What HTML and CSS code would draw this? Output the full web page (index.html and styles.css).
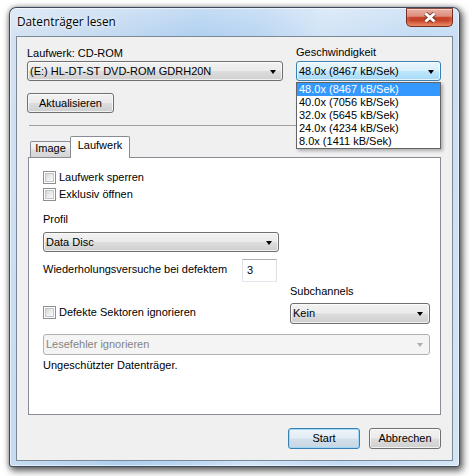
FILE: index.html
```html
<!DOCTYPE html>
<html lang="de">
<head>
<meta charset="utf-8">
<title>Datenträger lesen</title>
<link rel="stylesheet" href="styles.css">
</head>
<body>
<div class="window">
  <div class="titlebar">
    <span class="caption">Datenträger lesen</span>
    <button class="close" aria-label="Schließen">
      <svg width="14" height="11" viewBox="0 0 14 11">
        <path d="M2.5 1.5 L11.5 9.5 M11.5 1.5 L2.5 9.5" stroke="#5a2219" stroke-opacity=".7" stroke-width="4.8" fill="none"/>
        <path d="M2.5 1.5 L11.5 9.5 M11.5 1.5 L2.5 9.5" stroke="#fff" stroke-width="3" fill="none"/>
      </svg>
    </button>
  </div>

  <div class="client">
    <div class="source">
      <div class="field">
        <div class="label">Laufwerk: CD-ROM</div>
        <div class="combo drive"><span>(E:) HL-DT-ST DVD-ROM GDRH20N</span><i class="arrow"></i></div>
        <button class="btn refresh">Aktualisieren</button>
      </div>
      <div class="field">
        <div class="label label-speed">Geschwindigkeit</div>
        <div class="dropdown">
          <div class="combo hot"><span>48.0x (8467 kB/Sek)</span><i class="arrow"></i></div>
          <ul class="listbox">
            <li class="selected">48.0x (8467 kB/Sek)</li>
            <li>40.0x (7056 kB/Sek)</li>
            <li>32.0x (5645 kB/Sek)</li>
            <li>24.0x (4234 kB/Sek)</li>
            <li>8.0x (1411 kB/Sek)</li>
          </ul>
        </div>
      </div>
    </div>

    <hr class="separator">

    <div class="tabs">
      <div class="tab">Image</div>
      <div class="tab active">Laufwerk</div>
    </div>

    <div class="panel">
      <label class="check"><span class="box"><span></span></span>Laufwerk sperren</label>
      <label class="check second"><span class="box"><span></span></span>Exklusiv öffnen</label>

      <div class="label profile-label">Profil</div>
      <div class="combo profile"><span>Data Disc</span><i class="arrow"></i></div>

      <div class="retry">
        <span class="retry-label">Wiederholungsversuche bei defektem</span>
        <span class="textbox">3</span>
      </div>

      <div class="sub">
        <label class="check sub-check"><span class="box"><span></span></span>Defekte Sektoren ignorieren</label>
        <div class="sub-field">
          <div class="label sub-label">Subchannels</div>
          <div class="combo kein"><span>Kein</span><i class="arrow"></i></div>
        </div>
      </div>

      <div class="combo disabled"><span>Lesefehler ignorieren</span><i class="arrow"></i></div>
      <div class="status">Ungeschützter Datenträger.</div>
    </div>

    <div class="actions">
      <button class="btn default">Start</button>
      <button class="btn">Abbrechen</button>
    </div>
  </div>
</div>
</body>
</html>
```

FILE: styles.css
```css
* { box-sizing: border-box; }

html, body { margin: 0; }

body {
  width: 470px;
  height: 476px;
  overflow: hidden;
  padding: 7px 0 0 9px;
  background: #fff;
  font: 11px/13px "Liberation Sans", Arial, sans-serif;
  color: #000;
}

/* ---------- window frame ---------- */
.window {
  width: 451px;
  height: 460px;
  display: flex;
  flex-direction: column;
  padding: 0 6px 5px 6px;
  border: 1px solid rgba(35, 48, 64, .85);
  border-radius: 7px 7px 3px 3px;
  background:
    linear-gradient(180deg, rgba(255,255,255,.28) 0, rgba(255,255,255,0) 30px),
    linear-gradient(100deg, #d4e3f3 0%, #c4daf0 18%, #afcff0 36%, #b9d5f2 48%, #d1e3f6 60%, #c3dbf4 78%, #d3e5f7 100%);
  box-shadow:
    inset 0 0 0 1px rgba(255,255,255,.55),
    2px 3px 7px 1px rgba(0,0,0,.6),
    0 0 5px rgba(0,0,0,.25);
}

.titlebar {
  height: 28px;
  flex: none;
  display: flex;
  justify-content: space-between;
  align-items: flex-start;
}

.caption {
  margin-top: 5px;
  padding-left: 1px;
  font: 11.8px/16px "Open Sans", "Noto Sans", sans-serif;
  color: #000;
  text-shadow: 0 0 6px rgba(255,255,255,.9), 0 0 2px rgba(255,255,255,.8);
}

.close {
  width: 47px;
  height: 19px;
  padding: 0;
  display: flex;
  align-items: center;
  justify-content: center;
  border: 1px solid #7a2e22;
  border-top-color: #8a4a40;
  border-radius: 1px 1px 5px 5px;
  background: linear-gradient(180deg, #eab0a3 0%, #dc8f80 42%, #c9472f 50%, #bf3d26 68%, #d4644a 100%);
  box-shadow: inset 0 1px 0 rgba(255,255,255,.45), inset 0 -3px 4px rgba(255,170,120,.55);
}

/* ---------- client area ---------- */
.client {
  flex: 1;
  background: #f0f0f0;
  border: 1px solid #7b8896;
  padding: 10px 11px 0 10px;
}

.label { height: 13px; }

.source {
  display: grid;
  grid-template-columns: 256px 145px;
  column-gap: 13px;
}

.field {
  display: flex;
  flex-direction: column;
  align-items: flex-start;
}

.field .label { margin-bottom: 1px; }
.field .label-speed { margin-top: -1px; margin-bottom: 2px; }

/* combo boxes and buttons share the Aero push-button look */
.combo,
.btn {
  border: 1px solid #707070;
  border-radius: 3px;
  background: linear-gradient(180deg, #f2f2f2 0%, #ebebeb 48%, #dddddd 52%, #cfcfcf 100%);
  box-shadow: inset 0 0 0 1px rgba(255,255,255,.7);
  font: inherit;
  color: #000;
}

.combo {
  height: 20px;
  display: flex;
  align-items: center;
  justify-content: space-between;
  padding: 0 6px 0 2px;
  white-space: nowrap;
}

.arrow {
  width: 0;
  height: 0;
  border-left: 3.5px solid transparent;
  border-right: 3.5px solid transparent;
  border-top: 4px solid #000;
  margin-top: 1px;
}

.combo.drive { width: 256px; }

.combo.hot {
  width: 145px;
  border-color: #3c7fb1;
  background: linear-gradient(180deg, #eaf6fd 0%, #d9f0fc 48%, #bee6fd 52%, #a7d9f5 100%);
}

.dropdown { position: relative; }

.listbox {
  position: absolute;
  top: 21px;
  left: 0;
  z-index: 5;
  width: 145px;
  margin: 0;
  padding: 0;
  list-style: none;
  background: #fff;
  border: 1px solid #646464;
  box-shadow: 2px 2px 3px rgba(0,0,0,.28);
}

.listbox li {
  height: 13px;
  line-height: 13px;
  padding-left: 2px;
  white-space: nowrap;
}

.listbox li.selected {
  background: #3399ff;
  color: #fff;
}

.btn {
  height: 20px;
  padding: 0;
  text-align: center;
}

.btn.refresh {
  width: 87px;
  margin-top: 12px;
}

.separator {
  height: 1px;
  margin: 12px 1px 0 2px;
  border: 0;
  background: #a0a0a0;
}

/* ---------- tab control ---------- */
.tabs {
  height: 21px;
  margin-top: 10px;
  padding-left: 3px;
  display: flex;
  align-items: flex-end;
}

.tab {
  height: 16px;
  width: 41px;
  text-align: center;
  border: 1px solid #898c95;
  border-bottom: 0;
  border-radius: 2px 2px 0 0;
  background: linear-gradient(180deg, #f3f3f3 0%, #ebebeb 45%, #dedede 55%, #d5d5d5 100%);
}

.tab.active {
  position: relative;
  z-index: 1;
  height: 22px;
  width: 60px;
  margin-left: -1px;
  margin-bottom: -1px;
  padding-top: 2px;
  background: #fff;
}

.panel {
  height: 258px;
  margin-left: 1px;
  border: 1px solid #898c95;
  background: #fff;
  padding: 13px 10px 0 14px;
}

.check {
  display: flex;
  align-items: center;
  gap: 3px;
  height: 13px;
  white-space: nowrap;
}

.check.second { margin-top: 4px; }

.box {
  width: 13px;
  height: 13px;
  flex: none;
  border: 1px solid #8e8f8f;
  background: #fff;
  padding: 1px;
}

.box span {
  display: block;
  width: 9px;
  height: 9px;
  border: 1px solid #c4c6ca;
  background: linear-gradient(135deg, #d3d6da 0%, #eceef0 55%, #f8f8f8 100%);
}

.profile-label { margin-top: 12px; }

.combo.profile {
  width: 236px;
  margin-top: 6px;
}

.retry {
  margin-top: 7px;
  display: flex;
  align-items: flex-start;
}

.retry-label {
  width: 199px;
  margin-top: 4px;
  white-space: nowrap;
}

.textbox {
  width: 35px;
  height: 23px;
  line-height: 21px;
  padding-left: 4px;
  border: 1px solid;
  border-color: #abadb3 #dbdfe6 #e3e9ef #e2e3ea;
  background: #fff;
}

.sub {
  margin-top: 3px;
  display: grid;
  grid-template-columns: 247px 1fr;
  align-items: end;
}

.sub-check { margin-bottom: 5px; }

.sub-label { margin-bottom: 5px; }

.combo.kein { height: 21px; }

.combo.disabled {
  height: 21px;
  margin-top: 10px;
  border-color: #adb2b5;
  background: #f4f4f4;
  box-shadow: none;
  color: #838383;
}

.combo.disabled .arrow { border-top-color: #aeaeae; }

.status { margin-top: 4px; }

/* ---------- dialog buttons ---------- */
.actions {
  margin-top: 13px;
  display: flex;
  justify-content: flex-end;
  gap: 9px;
}

.actions .btn {
  width: 72px;
  height: 21px;
}

.btn.default {
  border-color: #3c7fb1;
  background: linear-gradient(180deg, #eef5fa 0%, #e3edf5 48%, #d3e0ea 52%, #c6d6e3 100%);
  box-shadow: inset 0 0 0 1px #9fd8f7;
}
```
